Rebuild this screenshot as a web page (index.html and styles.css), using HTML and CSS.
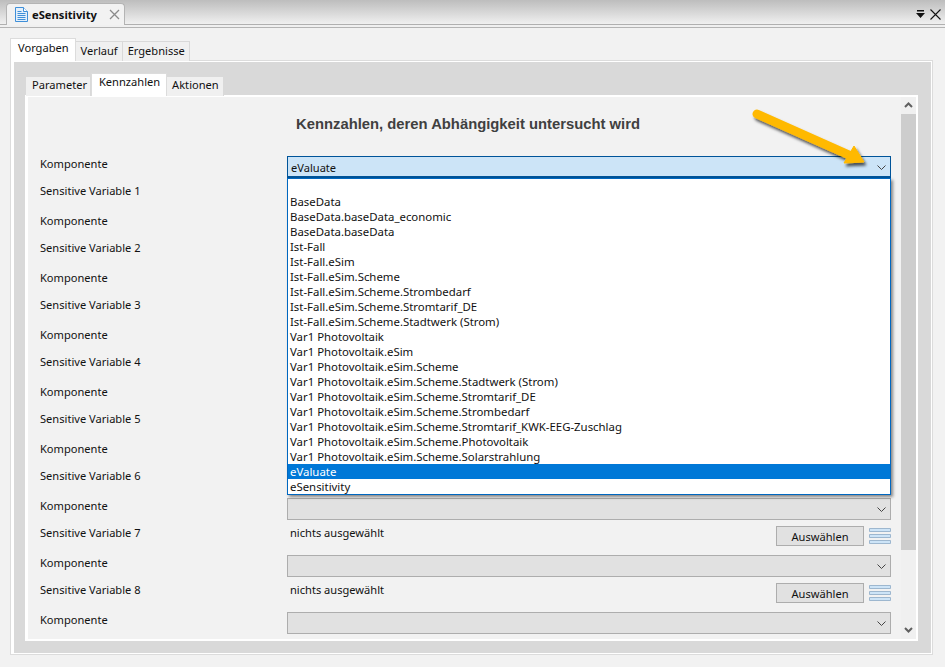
FILE: index.html
```html
<!DOCTYPE html>
<html lang="de">
<head>
<meta charset="utf-8">
<title>eSensitivity</title>
<link rel="stylesheet" href="styles.css">
</head>
<body>
<header class="topbar">
  <div class="doc-tab">
    <svg class="doc-icon" width="13" height="15" viewBox="0 0 13 15"><path d="M.5.500h8l4 4v10H.5z" fill="#e4f0fb" stroke="#3f8fd8"/><path d="M8.500.500v4h4" fill="#fff" stroke="#3f8fd8"/><path d="M2.500 4.500h4M2.500 6.500h8M2.500 8.500h8M2.500 10.500h8M2.500 12.500h8" stroke="#3f8fd8"/></svg>
    <span class="doc-title">eSensitivity</span>
    <svg class="doc-close" width="11" height="11" viewBox="0 0 11 11"><path d="M1 1l9 9M10 1l-9 9" stroke="#8a8a8a" stroke-width="1.300"/></svg>
  </div>
  <div class="win-controls">
    <svg width="9" height="8" viewBox="0 0 9 8"><path d="M1 0h7v1.500H1zM0 3h9L4.500 8z" fill="#111"/></svg>
    <svg width="11" height="11" viewBox="0 0 11 11"><path d="M.5.500l10 10M10.500.500l-10 10" stroke="#111" stroke-width="1.100"/></svg>
  </div>
</header>
<main class="page">
  <nav class="tabs outer-tabs">
    <span class="tab active">Vorgaben</span><span class="tab">Verlauf</span><span class="tab">Ergebnisse</span>
  </nav>
  <section class="outer-panel">
    <nav class="tabs inner-tabs">
      <span class="tab tab-first">Parameter</span><span class="tab active">Kennzahlen</span><span class="tab">Aktionen</span>
    </nav>
    <div class="inner-panel">
      <div class="scroll-content">
        <h1 class="title">Kennzahlen, deren Abhängigkeit untersucht wird</h1>
        <div class="form">
          <div class="label label-comp">Komponente</div><div class="combo focus"><span>eValuate</span><svg class="chev" width="9" height="5" viewBox="0 0 9 5"><path d="M.5.500l4 4 4-4" fill="none" stroke="#444"/></svg></div>
          <div class="label label-var">Sensitive Variable 1</div><div class="var"></div>
          <div class="label label-comp">Komponente</div><div class="combo"></div>
          <div class="label label-var">Sensitive Variable 2</div><div class="var"></div>
          <div class="label label-comp">Komponente</div><div class="combo"></div>
          <div class="label label-var">Sensitive Variable 3</div><div class="var"></div>
          <div class="label label-comp">Komponente</div><div class="combo"></div>
          <div class="label label-var">Sensitive Variable 4</div><div class="var"></div>
          <div class="label label-comp">Komponente</div><div class="combo"></div>
          <div class="label label-var">Sensitive Variable 5</div><div class="var"></div>
          <div class="label label-comp">Komponente</div><div class="combo"></div>
          <div class="label label-var">Sensitive Variable 6</div><div class="var"></div>
          <div class="label label-comp">Komponente</div><div class="combo"><svg class="chev" width="9" height="5" viewBox="0 0 9 5"><path d="M.5.500l4 4 4-4" fill="none" stroke="#444"/></svg></div>
          <div class="label label-var">Sensitive Variable 7</div><div class="var"><span>nichts ausgewählt</span><button class="btn">Auswählen</button><svg class="list-icon" width="22" height="16" viewBox="0 0 22 16"><path d="M.5.500h21v3H.5zM.5 6.500h21v3H.5zM.5 12.500h21v3H.5z" fill="#cde4f7" stroke="#9db7cf"/></svg></div>
          <div class="label label-comp">Komponente</div><div class="combo"><svg class="chev" width="9" height="5" viewBox="0 0 9 5"><path d="M.5.500l4 4 4-4" fill="none" stroke="#444"/></svg></div>
          <div class="label label-var">Sensitive Variable 8</div><div class="var"><span>nichts ausgewählt</span><button class="btn">Auswählen</button><svg class="list-icon" width="22" height="16" viewBox="0 0 22 16"><path d="M.5.500h21v3H.5zM.5 6.500h21v3H.5zM.5 12.500h21v3H.5z" fill="#cde4f7" stroke="#9db7cf"/></svg></div>
          <div class="label label-comp">Komponente</div><div class="combo"><svg class="chev" width="9" height="5" viewBox="0 0 9 5"><path d="M.5.500l4 4 4-4" fill="none" stroke="#444"/></svg></div>
        </div>
      </div>
      <div class="scrollbar">
        <svg class="sb-arrow" width="9" height="6" viewBox="0 0 9 6"><path d="M1 5l3.500-3.500L8 5" fill="none" stroke="#606060" stroke-width="2"/></svg>
        <div class="sb-thumb"></div>
        <div class="sb-rest"></div>
        <svg class="sb-arrow" width="9" height="6" viewBox="0 0 9 6"><path d="M1 1l3.500 3.500L8 1" fill="none" stroke="#606060" stroke-width="2"/></svg>
      </div>
    </div>
  </section>
</main>
<ul class="popup">
  <li>&nbsp;</li>
  <li>BaseData</li>
  <li>BaseData.baseData_economic</li>
  <li>BaseData.baseData</li>
  <li>Ist-Fall</li>
  <li>Ist-Fall.eSim</li>
  <li>Ist-Fall.eSim.Scheme</li>
  <li>Ist-Fall.eSim.Scheme.Strombedarf</li>
  <li>Ist-Fall.eSim.Scheme.Stromtarif_DE</li>
  <li>Ist-Fall.eSim.Scheme.Stadtwerk (Strom)</li>
  <li>Var1 Photovoltaik</li>
  <li>Var1 Photovoltaik.eSim</li>
  <li>Var1 Photovoltaik.eSim.Scheme</li>
  <li>Var1 Photovoltaik.eSim.Scheme.Stadtwerk (Strom)</li>
  <li>Var1 Photovoltaik.eSim.Scheme.Stromtarif_DE</li>
  <li>Var1 Photovoltaik.eSim.Scheme.Strombedarf</li>
  <li>Var1 Photovoltaik.eSim.Scheme.Stromtarif_KWK-EEG-Zuschlag</li>
  <li>Var1 Photovoltaik.eSim.Scheme.Photovoltaik</li>
  <li>Var1 Photovoltaik.eSim.Scheme.Solarstrahlung</li>
  <li class="selected">eValuate</li>
  <li>eSensitivity</li>
</ul>
<svg class="callout" width="130" height="70" viewBox="0 0 130 70">
  <defs><filter id="sh" x="-20%" y="-30%" width="140%" height="170%"><feDropShadow dx="2" dy="3" stdDeviation="1.800" flood-color="#000" flood-opacity=".65"/></filter></defs>
  <g filter="url(#sh)"><path d="M7 8L99 49" stroke="#ffb900" stroke-width="9" stroke-linecap="round" fill="none"/><path d="M104 40L114 56L94 57z" fill="#ffb900" stroke="#ffb900" stroke-linejoin="round"/></g>
</svg>
</body>
</html>
```
FILE: styles.css
```css
* { box-sizing: border-box; }
html, body { margin: 0; height: 100%; }
body {
  position: relative;
  width: 945px;
  height: 667px;
  overflow: hidden;
  background: #f2f2f2;
  color: #111;
  font: 11.100px/15px "Noto Sans", "Open Sans", sans-serif;
}
.topbar {
  height: 28px;
  display: flex;
  justify-content: space-between;
  padding-top: 3px;
  padding-left: 6px;
  background: linear-gradient(#bdbdbd 0, #f0f0f0 24px, #f0f0f0 24px);
  border-bottom: 1px solid #b4b4b4;
  position: relative;
}
.topbar::after {
  content: "";
  position: absolute;
  left: 0; right: 0; top: 24px;
  height: 1px;
  background: #b0b0b0;
}
.doc-tab {
  position: relative;
  z-index: 1;
  width: 119px;
  height: 22px;
  display: flex;
  align-items: center;
  gap: 4px;
  padding: 0 0 0 8px;
  background: #f2f2f2;
  border: 1px solid #b4b4b4;
  border-bottom: 0;
  border-radius: 4px 4px 0 0;
}
.doc-icon { flex: none; }
.doc-title { font-weight: 700; font-size: 11.200px; width: 66px; white-space: nowrap; }
.doc-close { flex: none; margin-left: 7px; }
.win-controls {
  display: flex;
  align-items: center;
  gap: 5px;
  height: 22px;
  padding: 0 4px 0 0;
}
.page { padding: 10px 12px 0 10px; height: 639px; display: flex; flex-direction: column; }
.tabs { display: flex; align-items: flex-end; position: relative; z-index: 1; }
.outer-tabs { height: 23px; margin-bottom: -1px; }
.inner-tabs { height: 23px; margin-left: 1px; margin-bottom: -1px; }
.tab {
  height: 20px;
  padding: 0 4px 0 5px;
  background: #f0f0f0;
  border: 1px solid #d9d9d9;
  border-left-width: 0;
  border-bottom: 0;
  line-height: 18px;
  white-space: nowrap;
}
.tab-first { padding: 0 3px 0 6px; }
.tab.active {
  height: 23px;
  background: #fff;
  border: 1px solid #dcdcdc;
  border-bottom: 0;
  line-height: 18px;
  padding: 0 6px 0 7px;
}
.inner-tabs .tab { line-height: 16px; }
.outer-panel {
  flex: none;
  height: 595px;
  display: flex;
  flex-direction: column;
  border: 1px solid #dcdcdc;
  background: #d9d9d9;
  padding: 12px 14px 13px 14px;
  box-shadow: inset 0 0 0 1px #fff, inset 2px 0 0 1px #fff;
}
.inner-panel {
  flex: 1;
  min-height: 0;
  display: flex;
  background: #f2f2f2;
  border: 2px solid #fff;
  border-left-width: 3px;
  overflow: hidden;
}
.scroll-content { flex: 1; min-width: 0; padding: 0 10px 0 12px; overflow: hidden; }
.title {
  margin: 18px 0 23px;
  padding-left: 5px;
  text-align: center;
  font: 700 14.800px/18px "Liberation Sans", Arial, sans-serif;
  color: #404040;
}
.form {
  display: grid;
  grid-template-columns: 247px 1fr;
}
.label { white-space: nowrap; }
.label-comp { height: 22px; line-height: 15px; }
.combo {
  position: relative;
  height: 22px;
  background: #e1e1e1;
  border: 1px solid #adadad;
  padding-left: 3px;
  line-height: 21px;
}
.combo.focus { background: #cce4f7; border-color: #005499; border-bottom-width: 2px; }
.chev { position: absolute; right: 4px; top: 8px; }
.var {
  height: 35px;
  display: flex;
  align-items: flex-start;
  padding-top: 6px;
  padding-left: 3px;
}
.var span { flex: 1; margin-top: -1px; }
.label-var { height: 35px; line-height: 15px; padding-top: 5px; }
.btn {
  width: 88px;
  height: 20px;
  padding: 0;
  margin-right: 5px;
  font: inherit;
  line-height: 17px;
  color: #111;
  background: #e1e1e1;
  border: 1px solid #adadad;
}
.list-icon { margin-top: 2px; flex: none; }
.scrollbar {
  flex: none;
  width: 15px;
  display: flex;
  flex-direction: column;
  align-items: center;
  background: #f0f0f0;
}
.sb-arrow { flex: none; margin: 5px 0 6px; }
.sb-thumb { flex: none; width: 15px; height: 436px; background: #cdcdcd; }
.sb-rest { flex: 1; }
.popup {
  position: absolute;
  left: 287px;
  top: 178px;
  width: 604px;
  height: 317px;
  margin: 0;
  padding: 0;
  list-style: none;
  background: #fff;
  border: 1px solid #0067c0;
  box-shadow: 2px 2px 3px rgba(0,0,0,.45);
  font-size: 11.400px;
}
.popup li { height: 15px; line-height: 15px; padding-left: 2px; white-space: nowrap; }
.popup .selected { background: #0078d7; color: #fff; }
.callout { position: absolute; left: 750px; top: 106px; pointer-events: none; }
```
